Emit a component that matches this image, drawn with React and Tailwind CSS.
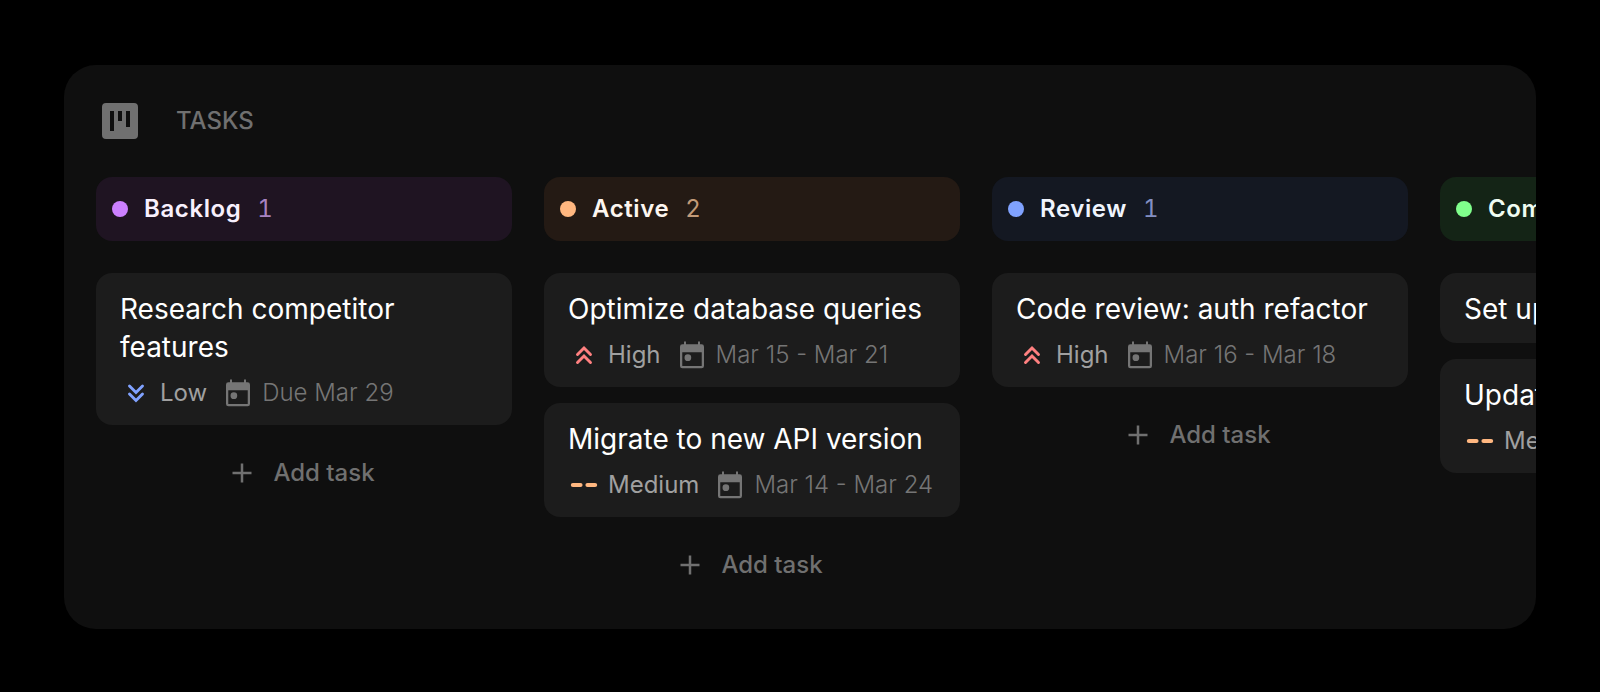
const TONES = {
  purple: { bar: 'bg-[#1f1422]', dot: 'bg-[#cc80ff]', label: 'text-[#f8f0fd]', count: 'text-[#a783c2]' },
  orange: { bar: 'bg-[#241a14]', dot: 'bg-[#ffb780]', label: 'text-[#fdf6f0]', count: 'text-[#c29a78]' },
  blue: { bar: 'bg-[#141822]', dot: 'bg-[#80a2ff]', label: 'text-[#f0f4fd]', count: 'text-[#838fc2]' },
  green: { bar: 'bg-[#142416]', dot: 'bg-[#80ff8c]', label: 'text-[#f0fdf2]', count: 'text-[#78c280]' },
}

const COLUMNS = [
  {
    name: 'Backlog',
    tone: 'purple',
    tasks: [{ title: 'Research competitor features', priority: 'Low', date: 'Due Mar 29' }],
  },
  {
    name: 'Active',
    tone: 'orange',
    tasks: [
      { title: 'Optimize database queries', priority: 'High', date: 'Mar 15 - Mar 21' },
      { title: 'Migrate to new API version', priority: 'Medium', date: 'Mar 14 - Mar 24' },
    ],
  },
  {
    name: 'Review',
    tone: 'blue',
    tasks: [{ title: 'Code review: auth refactor', priority: 'High', date: 'Mar 16 - Mar 18' }],
  },
  {
    name: 'Completed',
    tone: 'green',
    tasks: [{ title: 'Set up CI pipeline' }, { title: 'Update docs', priority: 'Medium' }],
  },
]

function KanbanIcon() {
  return (
    <svg className="size-12 shrink-0" viewBox="0 0 24 24" fill="currentColor" aria-hidden="true">
      <path
        fillRule="evenodd"
        d="M5 3h14a2 2 0 0 1 2 2v14a2 2 0 0 1-2 2H5a2 2 0 0 1-2-2V5a2 2 0 0 1 2-2zM7 7v10h2V7zM11 7v5h2V7zM15 7v8h2V7z"
      />
    </svg>
  )
}

function CalendarIcon() {
  return (
    <svg className="size-8 shrink-0" viewBox="0 0 24 24" fill="currentColor" aria-hidden="true">
      <path
        fillRule="evenodd"
        d="M6 2.500a.75.75 0 0 1 1.500 0V4h9V2.500a.75.75 0 0 1 1.500 0V4h1.200A1.800 1.800 0 0 1 21 5.800v14.400a1.800 1.800 0 0 1-1.800 1.800H4.800A1.800 1.800 0 0 1 3 20.200V5.800A1.800 1.800 0 0 1 4.800 4H6zM4.700 10v10a.3.3 0 0 0 .3.3h14a.3.3 0 0 0 .3-.3V10z"
      />
      <circle cx="8.900" cy="14" r="2.500" />
    </svg>
  )
}

function PriorityIcon({ level }) {
  if (level === 'Medium') {
    return (
      <svg className="size-8 shrink-0 text-[#ffb780]" viewBox="0 0 32 32" stroke="currentColor" strokeWidth="4.200" strokeLinecap="round" aria-hidden="true">
        <path d="M4.900 16h7.600M19.500 16h7.600" />
      </svg>
    )
  }
  const high = level === 'High'
  return (
    <svg
      className={high ? 'size-8 shrink-0 text-[#ff8080]' : 'size-8 shrink-0 text-[#80a2ff]'}
      viewBox="0 0 32 32"
      fill="none"
      stroke="currentColor"
      strokeWidth="2.900"
      strokeLinecap="round"
      aria-hidden="true"
    >
      {high ? <path d="M9.500 15.500L16 9l6.500 6.500M9.500 23.500L16 17l6.500 6.500" /> : <path d="M9.500 9L16 15.500 22.500 9M9.500 17L16 23.500 22.500 17" />}
    </svg>
  )
}

function PlusIcon() {
  return (
    <svg className="size-8 shrink-0" viewBox="0 0 32 32" stroke="currentColor" strokeWidth="2.500" aria-hidden="true">
      <path d="M16 6.500v19M6.500 16h19" />
    </svg>
  )
}

function TaskCard({ task }) {
  return (
    <li className="rounded-2xl bg-[#1c1c1c] px-6 pt-[17px] pb-[15px]">
      <h3 className="text-[28px] leading-[38px] text-white">{task.title}</h3>
      {task.priority && (
        <div className="flex h-11 items-end gap-[15px] text-2xl leading-[34px] whitespace-nowrap">
          <span className="flex items-center gap-2 text-[#a0a0a0]">
            <PriorityIcon level={task.priority} />
            {task.priority}
          </span>
          {task.date && (
            <span className="flex items-center gap-2 font-light text-[#757575]">
              <CalendarIcon />
              {task.date}
            </span>
          )}
        </div>
      )}
    </li>
  )
}

function Column({ column }) {
  const tone = TONES[column.tone]
  return (
    <section className="flex w-[416px] shrink-0 flex-col gap-8">
      <header className={`flex h-16 items-center gap-4 rounded-2xl px-4 text-2xl ${tone.bar}`}>
        <span className={`size-4 rounded-full ${tone.dot}`} />
        <h2 className={`font-semibold tracking-wide ${tone.label}`}>{column.name}</h2>
        <span className={`tabular-nums ${tone.count}`}>{column.tasks.length}</span>
      </header>
      <div className="flex flex-col gap-4">
        <ul className="flex flex-col gap-4">
          {column.tasks.map((task) => (
            <TaskCard key={task.title} task={task} />
          ))}
        </ul>
        <button type="button" className="flex h-16 items-center justify-center gap-[15px] rounded-2xl pr-[7px] text-2xl font-medium text-[#707070]">
          <PlusIcon />
          Add task
        </button>
      </div>
    </section>
  )
}

export default function App() {
  return (
    <div className="min-h-screen bg-black px-16 pt-[65px] pb-[63px] font-['Inter',sans-serif]">
      <main className="overflow-hidden rounded-[32px] bg-[#0f0f0f] p-8">
        <div className="mb-8 flex items-center gap-8 text-[#707070]">
          <KanbanIcon />
          <h1 className="text-2xl font-medium">TASKS</h1>
        </div>
        <div className="flex items-start gap-8">
          {COLUMNS.map((column) => (
            <Column key={column.name} column={column} />
          ))}
        </div>
      </main>
    </div>
  )
}
